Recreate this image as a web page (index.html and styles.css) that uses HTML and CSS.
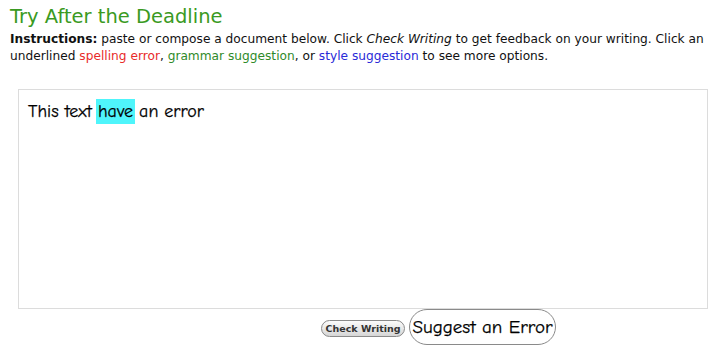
FILE: index.html
```html
<!DOCTYPE html>
<html>
<head>
<meta charset="utf-8">
<link rel="stylesheet" href="styles.css">
</head>
<body>
<div class="page">
  <h1 class="title">Try After the Deadline</h1>
  <p class="instructions"><strong>Instructions:</strong> paste or compose a document below. Click <em>Check Writing</em> to get feedback on your writing. Click an underlined <span class="spell">spelling error</span>, <span class="grammar">grammar suggestion</span>, or <span class="style">style suggestion</span> to see more options.</p>
  <div class="editor">This text <span class="hl">have</span> an error</div>
  <div class="actions">
    <button class="btn-check">Check Writing</button>
    <button class="btn-suggest">Suggest an Error</button>
  </div>
</div>
</body>
</html>
```
FILE: styles.css
```css
html, body {
  margin: 0;
  padding: 0;
  background: #ffffff;
}
.page {
  padding: 6px 10px 0 10px;
  font-family: "DejaVu Sans", Verdana, sans-serif;
  color: #111;
}
.title {
  margin: 0;
  font-size: 19.5px;
  font-weight: normal;
  color: #3a9a22;
  line-height: 22px;
}
.instructions {
  margin: 3px 0 0 0;
  font-size: 12.2px;
  line-height: 17px;
  width: 704px;
}
.instructions strong { font-weight: bold; }
.spell { color: #e82a2a; }
.grammar { color: #2f8a2a; }
.style { color: #2a2ad8; }
.editor {
  margin: 24px 0 0 8px;
  width: 679px;
  height: 207px;
  border: 1px solid #dcdcdc;
  padding: 11px 0 0 9px;
  font-family: "Comic Neue", "Open Sans", sans-serif;
  font-size: 18px;
  line-height: 22px;
  color: #000;
  -webkit-text-stroke: 0.25px #000;
}
.hl {
  background: #4ff5fb;
  padding: 2px 2px;
  margin: 0 -2px;
}
.actions {
  display: flex;
  align-items: center;
  gap: 4px;
  padding-left: 311px;
  margin-top: 0;
}
.btn-check {
  width: 84px;
  height: 17px;
  padding: 0;
  border: 1px solid #8a8a8a;
  border-radius: 9px;
  background: linear-gradient(#fbfbfb, #d6d6d6);
  font-family: "DejaVu Sans", Verdana, sans-serif;
  font-size: 9.5px;
  font-weight: bold;
  color: #333;
  margin-top: 2px;
}
.btn-suggest {
  width: 147px;
  height: 36px;
  padding: 0;
  border: 1px solid #8a8a8a;
  border-radius: 18px;
  background: #fff;
  font-family: "Comic Neue", "Open Sans", sans-serif;
  font-size: 19px;
  color: #000;
  -webkit-text-stroke: 0.25px #000;
}
```
